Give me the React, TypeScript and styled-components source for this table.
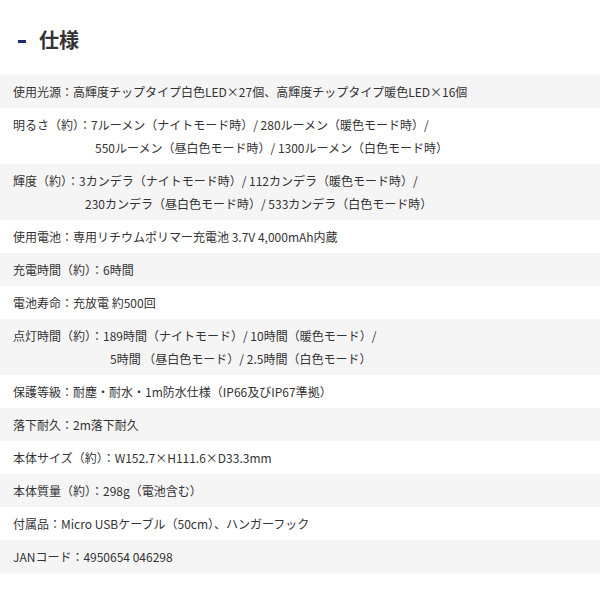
import styled, { createGlobalStyle } from "styled-components";

const GlobalStyle = createGlobalStyle`
  body {
    margin: 0;
    background: #fff;
    font-family: "Noto Sans CJK JP", "Noto Sans", sans-serif;
    color: #333;
  }
`

interface Spec {
    lines: string[];
    indent?: number;
}

const specs: Spec[] = [
    { lines: ['使用光源：高輝度チップタイプ白色LED×27個、高輝度チップタイプ暖色LED×16個'] },
    { lines: ['明るさ（約）：7ルーメン（ナイトモード時）/ 280ルーメン（暖色モード時）/', '550ルーメン（昼白色モード時）/ 1300ルーメン（白色モード時）'], indent: 82 },
    { lines: ['輝度（約）：3カンデラ（ナイトモード時）/ 112カンデラ（暖色モード時）/', '230カンデラ（昼白色モード時）/ 533カンデラ（白色モード時）'], indent: 72 },
    { lines: ['使用電池：専用リチウムポリマー充電池 3.7V 4,000mAh内蔵'] },
    { lines: ['充電時間（約）：6時間'] },
    { lines: ['電池寿命：充放電 約500回'] },
    { lines: ['点灯時間（約）：189時間（ナイトモード）/ 10時間（暖色モード）/', '5時間 （昼白色モード）/ 2.5時間（白色モード）'], indent: 97 },
    { lines: ['保護等級：耐塵・耐水・1m防水仕様（IP66及びIP67準拠）'] },
    { lines: ['落下耐久：2m落下耐久'] },
    { lines: ['本体サイズ（約）：W152.7×H111.6×D33.3mm'] },
    { lines: ['本体質量（約）：298g（電池含む）'] },
    { lines: ['付属品：Micro USBケーブル（50cm）、ハンガーフック'] },
    { lines: ['JANコード：4950654 046298'] },
]

export default function App() {
    return (
        <Page>
            <GlobalStyle />
            <Heading>
                <Dash />
                仕様
            </Heading>
            <SpecList>
                {specs.map((spec, index) => (
                    <SpecRow key={index} $shaded={index % 2 === 0}>
                        {spec.lines.map((line, i) => (
                            <SpecLine key={i} $indent={i > 0 ? spec.indent ?? 0 : 0}>{line}</SpecLine>
                        ))}
                    </SpecRow>
                ))}
            </SpecList>
        </Page>
    )
}

const Page = styled.div`
  width: 600px;
  padding-top: 27px;
`
const Heading = styled.h2`
  margin: 0 0 22px;
  padding-left: 18px;
  display: flex;
  align-items: center;
  gap: 13px;
  font-size: 20px;
  font-weight: 700;
  line-height: 26px;
  color: #333;
`
const Dash = styled.span`
  display: block;
  width: 8px;
  height: 3px;
  margin-top: 3px;
  background: #1d2b6b;
`
const SpecList = styled.div`
  display: flex;
  flex-direction: column;
`
const SpecRow = styled.div<{ $shaded: boolean }>`
  padding: 5px 13px;
  background: ${props => props.$shaded ? '#f5f5f5' : '#fff'};
`
const SpecLine = styled.div<{ $indent: number }>`
  font-size: 12px;
  line-height: 23px;
  white-space: nowrap;
  padding-left: ${props => props.$indent}px;
`
